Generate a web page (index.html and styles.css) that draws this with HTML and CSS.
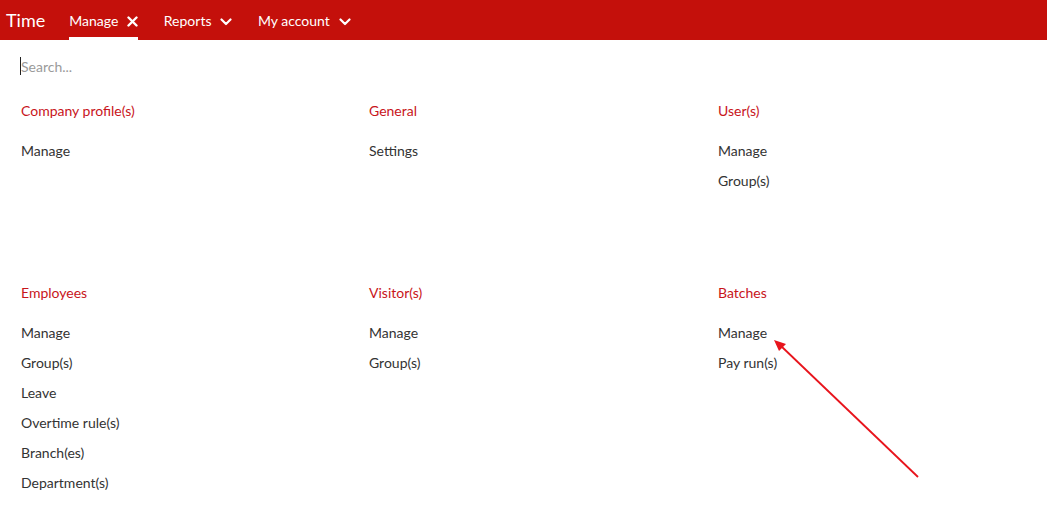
FILE: index.html
```html
<!DOCTYPE html>
<html>
<head>
<meta charset="utf-8">
<link rel="stylesheet" href="styles.css">
</head>
<body>
<header class="topbar">
  <div class="brand">Time</div>
  <nav class="nav">
    <a class="nav-item active">Manage
      <svg class="ico" width="11" height="11" viewBox="0 0 11 11"><path d="M1.5 1.5 L9.5 9.5 M9.5 1.5 L1.5 9.5" stroke="#fff" stroke-width="2.4" stroke-linecap="round"/></svg>
    </a>
    <a class="nav-item">Reports
      <svg class="ico" width="12" height="8" viewBox="0 0 12 8"><path d="M1.5 1.5 L6 6 L10.5 1.5" stroke="#fff" stroke-width="2.2" fill="none" stroke-linecap="round" stroke-linejoin="round"/></svg>
    </a>
    <a class="nav-item">My account
      <svg class="ico" width="12" height="8" viewBox="0 0 12 8"><path d="M1.5 1.5 L6 6 L10.5 1.5" stroke="#fff" stroke-width="2.2" fill="none" stroke-linecap="round" stroke-linejoin="round"/></svg>
    </a>
  </nav>
</header>
<main class="content">
  <div class="search"><span class="caret"></span><input class="search-input" type="text" placeholder="Search..."></div>
  <div class="grid">
    <section class="group">
      <h3 class="group-title">Company profile(s)</h3>
      <ul class="links"><li>Manage</li></ul>
    </section>
    <section class="group">
      <h3 class="group-title">General</h3>
      <ul class="links"><li>Settings</li></ul>
    </section>
    <section class="group">
      <h3 class="group-title">User(s)</h3>
      <ul class="links"><li>Manage</li><li>Group(s)</li></ul>
    </section>
    <section class="group">
      <h3 class="group-title">Employees</h3>
      <ul class="links"><li>Manage</li><li>Group(s)</li><li>Leave</li><li>Overtime rule(s)</li><li>Branch(es)</li><li>Department(s)</li></ul>
    </section>
    <section class="group">
      <h3 class="group-title">Visitor(s)</h3>
      <ul class="links"><li>Manage</li><li>Group(s)</li></ul>
    </section>
    <section class="group">
      <h3 class="group-title">Batches</h3>
      <ul class="links"><li>Manage</li><li>Pay run(s)</li></ul>
    </section>
  </div>
</main>
<svg class="annotation" width="1047" height="505" viewBox="0 0 1047 505">
  <line x1="918" y1="477" x2="781" y2="346" stroke="#e8141c" stroke-width="1.8"/>
  <polygon points="774,340 786,344 779,351" fill="#e8141c"/>
</svg>
</body>
</html>
```
FILE: styles.css
```css
* { box-sizing: border-box; }
html, body { margin: 0; padding: 0; }
body {
  width: 1047px;
  height: 505px;
  overflow: hidden;
  background: #fff;
  font-family: Lato, "Open Sans", sans-serif;
  font-size: 14px;
  color: #333;
  position: relative;
}
.topbar {
  display: flex;
  align-items: stretch;
  height: 40px;
  background: #c4100b;
  color: #fff;
}
.brand {
  font-size: 18px;
  line-height: 40px;
  padding-left: 6px;
  margin-right: 24px;
}
.nav {
  display: flex;
  gap: 25.5px;
}
.nav-item {
  display: flex;
  align-items: center;
  gap: 9px;
  color: #fff;
  font-size: 14px;
  line-height: 20px;
  padding-top: 4px;
  border-bottom: 3px solid transparent;
  cursor: pointer;
}
.nav-item.active { border-bottom-color: #fff; }
.ico { display: block; margin-top: 1px; }
.nav-item:not(.active) .ico { margin-top: 2px; }

.content { padding: 0; }
.search {
  position: relative;
  margin: 16px 0 0 20px;
  height: 20px;
}
.caret {
  position: absolute;
  left: 0;
  top: 1px;
  width: 1px;
  height: 18px;
  background: #222;
}
.search-input {
  border: none;
  outline: none;
  padding: 0 0 0 1px;
  height: 20px;
  width: 400px;
  font-family: Lato, sans-serif;
  font-size: 14px;
  color: #333;
  background: transparent;
}
.search-input::placeholder { color: #9a9a9a; }

.grid {
  display: grid;
  grid-template-columns: 348px 349px 1fr;
  padding-left: 21px;
  margin-top: 25px;
}
.group { min-height: 182px; }
.group-title {
  margin: 0 0 20px;
  font-weight: normal;
  font-size: 14px;
  line-height: 20px;
  color: #c8151b;
}
.links {
  list-style: none;
  margin: 0;
  padding: 0;
}
.links li {
  line-height: 20px;
  margin-bottom: 10px;
  color: #333;
}
.annotation {
  position: absolute;
  left: 0;
  top: 0;
  pointer-events: none;
}
```
